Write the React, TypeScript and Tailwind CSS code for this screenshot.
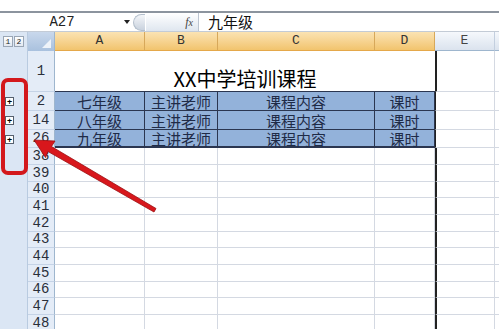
import React from "react";

const COLS = [
  { k: "A", w: 90 },
  { k: "B", w: 73 },
  { k: "C", w: 157 },
  { k: "D", w: 60 },
];

const mono = { fontFamily: '"Liberation Mono", "DejaVu Sans Mono", monospace' };
const cjk = { fontFamily: '"Noto Sans CJK SC", "Noto Sans", sans-serif' };

function Outline({ plus }: { plus?: boolean }) {
  return (
    <div className="w-[28px] shrink-0 h-full bg-[#dbe6f4] border-r border-[#b9cbe0] flex items-center pl-[5px]">
      {plus && (
        <div className="w-[9px] h-[9px] bg-white border border-[#55606e] flex items-center justify-center text-[9px] leading-none font-bold text-black">
          +
        </div>
      )}
    </div>
  );
}

function RowHead({ n }: { n: string }) {
  return (
    <div
      className="w-[27px] shrink-0 h-full bg-[#e4ecf7] border-r border-[#9eb6ce] border-b border-b-[#c5d3e6] flex items-center justify-center text-[14px] text-[#2a2f3a]"
      style={mono}
    >
      {n}
    </div>
  );
}

function BlueRow({ n, label, last }: { n: string; label: string; last?: boolean }) {
  const vals = [label, "主讲老师", "课程内容", "课时"];
  return (
    <div className={`flex ${last ? "h-[18px]" : "h-[19px]"}`}>
      <Outline plus />
      <RowHead n={n} />
      {COLS.map((c, i) => (
        <div
          key={c.k}
          className={`h-full bg-[#93b2da] border-r border-[#2b3650] ${last ? "border-b-2" : "border-b"} border-b-[#2b3650] flex items-center justify-center text-[15px] leading-none text-[#1f2b47]`}
          style={{ width: c.w, ...cjk }}
        >
          {vals[i]}
        </div>
      ))}
      <div className="w-[60px] h-full border-b border-[#d4d9e2] border-r border-r-[#d4d9e2] border-l border-l-[#222]" />
      <div className="flex-1 h-full border-b border-[#d4d9e2]" />
    </div>
  );
}

function EmptyRow({ n, h }: { n: string; h: number }) {
  return (
    <div className="flex" style={{ height: h }}>
      <Outline />
      <RowHead n={n} />
      {COLS.map((c) => (
        <div key={c.k} className="h-full border-r border-b border-[#d4d9e2]" style={{ width: c.w }} />
      ))}
      <div className="w-[60px] h-full border-b border-[#d4d9e2] border-r border-r-[#d4d9e2] border-l-2 border-l-[#222]" />
      <div className="flex-1 h-full border-b border-[#d4d9e2]" />
    </div>
  );
}

export default function App() {
  const empties = ["38", "39", "40", "41", "42", "43", "44", "45", "46", "47", "48"];
  const hs = [17, 17, 16];
  return (
    <div className="relative w-[499px] h-[329px] overflow-hidden bg-white">
      <div className="h-[11px] bg-white" />
      <div className="h-[2px] bg-[#8c949e]" />
      {/* formula bar */}
      <div className="h-[19px] flex items-stretch bg-white border-b border-[#c3cbd6]">
        <div className="w-[120px] flex items-center justify-center text-[14px] text-[#222] pl-[4px]" style={mono}>
          A27
        </div>
        <div className="w-[13px] flex items-center justify-center">
          <svg width="6" height="4" viewBox="0 0 6 4">
            <path d="M0 0H6L3 4Z" fill="#222" />
          </svg>
        </div>
        <div className="w-[13px] flex items-center">
          <div className="w-[12px] h-[17px] rounded-l-full bg-gradient-to-b from-[#f4f6f9] to-[#c9d2de] border border-[#b4bfcc] border-r-0" />
        </div>
        <div className="w-[53px] bg-gradient-to-b from-[#ffffff] to-[#dfe6ef] flex items-center justify-end pr-[5px] border-r border-[#bcc5d1]">
          <span className="text-[12px] italic text-[#444]" style={{ fontFamily: '"Liberation Serif", serif' }}>
            f<span className="text-[10px]">x</span>
          </span>
        </div>
        <div className="flex-1 flex items-center pl-[9px] text-[15px] text-[#111]" style={cjk}>
          九年级
        </div>
      </div>
      {/* column header */}
      <div className="h-[19px] flex">
        <div className="w-[28px] shrink-0 bg-[#dbe6f4] border-r border-[#b9cbe0] flex items-center gap-[1px] pl-[3px]">
          <div className="w-[10px] h-[11px] bg-gradient-to-b from-white to-[#e3e9f1] border border-[#9aa6b5] text-[8px] leading-none flex items-center justify-center text-[#222]" style={mono}>
            1
          </div>
          <div className="w-[10px] h-[11px] bg-gradient-to-b from-white to-[#e3e9f1] border border-[#9aa6b5] text-[8px] leading-none flex items-center justify-center text-[#222]" style={mono}>
            2
          </div>
        </div>
        <div className="relative w-[27px] shrink-0 bg-gradient-to-b from-[#c9d8ec] to-[#a9c1de] border-r border-[#9eb6ce]">
          <svg className="absolute right-[3px] bottom-[3px]" width="9" height="9" viewBox="0 0 9 9">
            <path d="M9 0V9H0Z" fill="#eef3f9" />
          </svg>
        </div>
        {COLS.map((c) => (
          <div
            key={c.k}
            className="h-full bg-gradient-to-b from-[#fbe3b3] to-[#f2c46d] border-r border-[#d7a85a] border-b border-b-[#e5a84a] flex items-center justify-center text-[13px] text-[#333]"
            style={{ width: c.w, ...mono }}
          >
            {c.k}
          </div>
        ))}
        <div className="w-[60px] h-full bg-gradient-to-b from-[#f5f8fc] to-[#dbe3ee] border-r border-[#c3cfdf] border-b border-b-[#9eb6ce] flex items-center justify-center text-[13px] text-[#444]" style={mono}>
          E
        </div>
        <div className="flex-1 h-full bg-gradient-to-b from-[#f5f8fc] to-[#dbe3ee] border-b border-[#9eb6ce]" />
      </div>
      {/* row 1 */}
      <div className="flex h-[41px]">
        <Outline />
        <RowHead n="1" />
        <div
          className="w-[380px] h-full flex items-end justify-center pb-[0px] text-[20px] leading-[24px] text-black border-b border-[#2b3650]"
          style={cjk}
        >
          XX中学培训课程
        </div>
        <div className="w-[60px] h-full border-b border-[#d4d9e2] border-r border-r-[#d4d9e2] border-l-2 border-l-[#222]" />
        <div className="flex-1 h-full border-b border-[#d4d9e2]" />
      </div>
      <BlueRow n="2" label="七年级" />
      <BlueRow n="14" label="八年级" />
      <BlueRow n="26" label="九年级" last />
      {empties.map((n, i) => (
        <EmptyRow key={n} n={n} h={hs[i % 3]} />
      ))}

      {/* red highlight box */}
      <div className="absolute left-[1px] top-[78px] w-[27px] h-[97px] border-[4px] border-[#d3181c] rounded-[7px]" />
      {/* red arrow */}
      <svg className="absolute left-0 top-0" width="499" height="329" viewBox="0 0 499 329">
        <polygon
          points="34,140 55,141 51.5,146.5 156,208.5 154,212 48,151.5 45.5,157.5"
          fill="#d8171c"
          stroke="#9c0f12"
          strokeWidth="0.8"
          strokeLinejoin="round"
        />
      </svg>
    </div>
  );
}
